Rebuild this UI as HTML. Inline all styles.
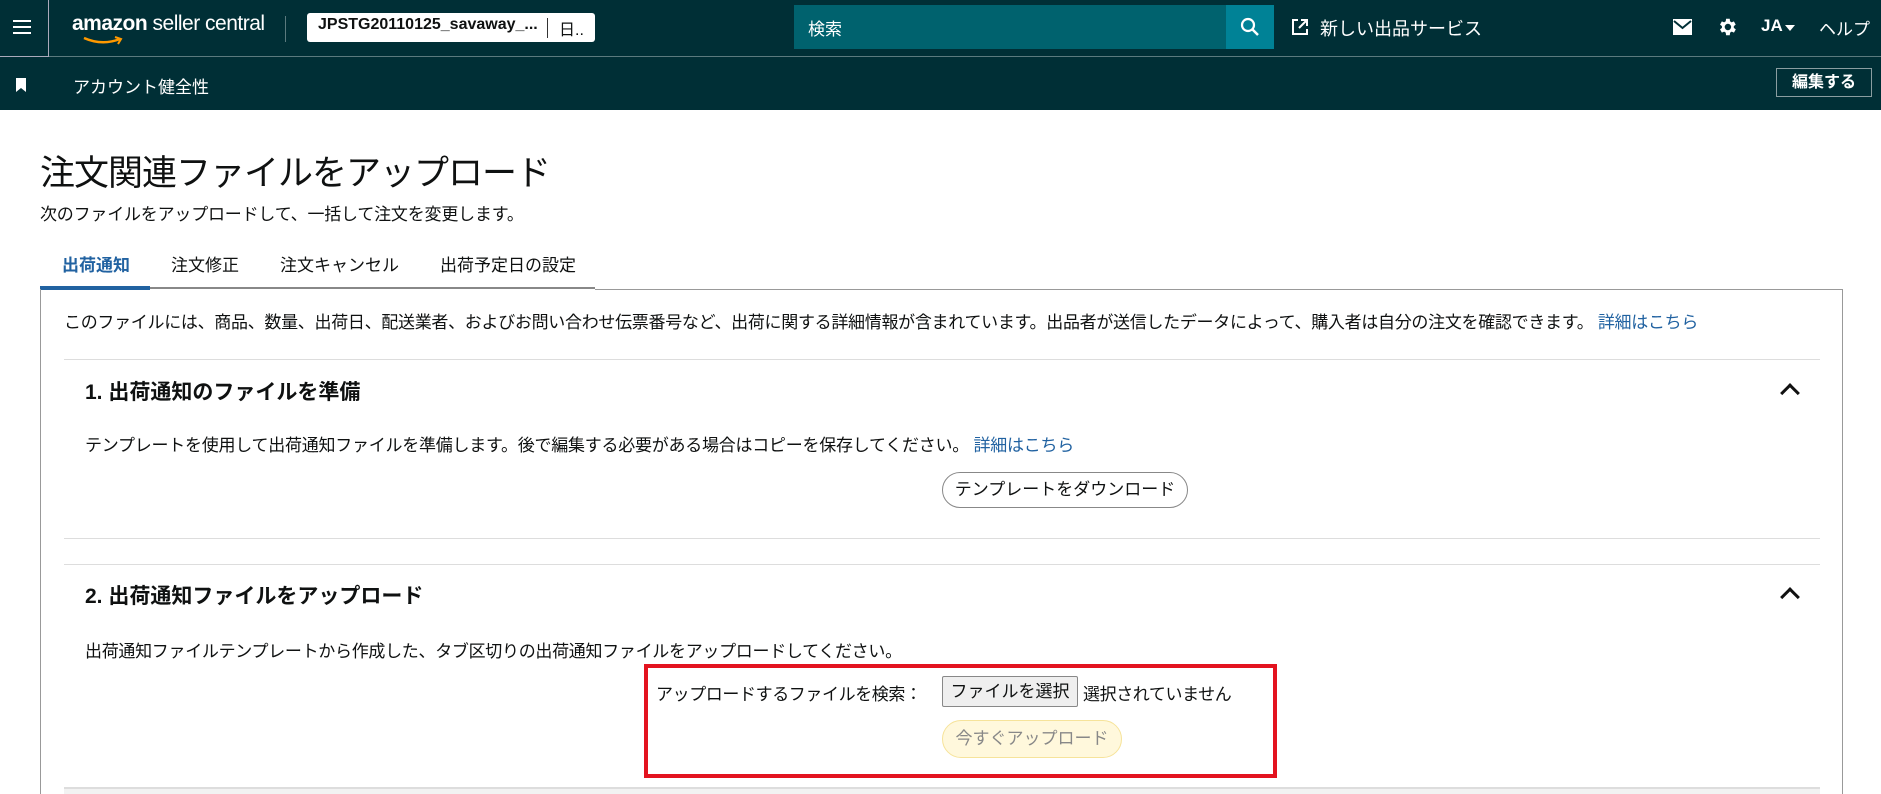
<!DOCTYPE html>
<html><head><meta charset="utf-8"><style>
*{box-sizing:border-box;margin:0;padding:0}
html,body{width:1881px;height:794px;overflow:hidden}
body{background:#fff;font-family:"Liberation Sans","Noto Sans CJK JP",sans-serif;color:#0f1111;position:relative}
.a{position:absolute;white-space:nowrap}
.top{position:absolute;left:0;top:0;width:1881px;height:57px;background:#002f36;border-bottom:1px solid #5b7a7e}
.sub{position:absolute;left:0;top:57px;width:1881px;height:53px;background:#002f36}
.w{color:#fff}
.link{color:#2162a1}
.sec{font-weight:bold;font-size:21px}
.chev{position:absolute;width:14px;height:14px;border-left:3px solid #111;border-top:3px solid #111;transform:rotate(45deg)}
.hr{position:absolute;left:64px;width:1756px;height:1px;background:#ddd}
</style></head><body>
<div class="top"></div>
<div class="sub"></div>
<div class="a" style="left:0;top:0;width:49px;height:57px;border-right:1px solid #aab;border-bottom:1px solid #aab"></div>
<div class="a" style="left:13px;top:20px;width:18px;height:2px;background:#fff;box-shadow:0 6px 0 #fff,0 12px 0 #fff"></div>
<div class="a w" style="left:72px;top:12px;font-size:21px;letter-spacing:-0.5px"><b>amazon</b> seller central</div>
<svg class="a" style="left:82px;top:36px" width="42" height="10"><path d="M2 2 Q20 10 38 3" stroke="#f90" stroke-width="2.5" fill="none"/><path d="M33 1 L39 3 L36 8" stroke="#f90" stroke-width="2" fill="none"/></svg>
<div class="a" style="left:285px;top:16px;width:1px;height:26px;background:#5b7a7e"></div>
<div class="a" style="left:307px;top:13px;width:288px;height:29px;background:#fff;border-radius:3px"></div>
<div class="a" style="left:318px;top:16px;font-size:16px;font-weight:bold">JPSTG20110125_savaway_...</div>
<div class="a" style="left:547px;top:18px;width:1px;height:20px;background:#333"></div>
<div class="a" style="left:559px;top:16px;font-size:16px">日..</div>
<div class="a" style="left:794px;top:5px;width:432px;height:44px;background:#00626e"></div>
<div class="a w" style="left:808px;top:15px;font-size:17px">検索</div>
<div class="a" style="left:1226px;top:5px;width:48px;height:44px;background:#008296"></div>
<svg class="a" style="left:1239px;top:16px" width="22" height="22"><circle cx="9" cy="9" r="6" stroke="#fff" stroke-width="2.2" fill="none"/><path d="M13.5 13.5 L19 19" stroke="#fff" stroke-width="2.5"/></svg>
<svg class="a" style="left:1290px;top:17px" width="20" height="20"><path d="M8 3 H3 V17 H17 V12" stroke="#fff" stroke-width="2" fill="none"/><path d="M11 3 H17 V9 M17 3 L9 11" stroke="#fff" stroke-width="2" fill="none"/></svg>
<div class="a w" style="left:1320px;top:15px;font-size:18px">新しい出品サービス</div>
<svg class="a" style="left:1672px;top:18px" width="21" height="18"><rect x="1" y="1" width="19" height="16" fill="#fff"/><path d="M2 3 L10.5 10 L19 3" stroke="#002f36" stroke-width="2" fill="none"/></svg>
<svg class="a" style="left:1716px;top:16px" width="22" height="22" viewBox="0 0 24 24"><path fill="#fff" d="M19.4 13a7.5 7.5 0 000-2l2.1-1.6-2-3.5-2.5 1a7 7 0 00-1.7-1L15 3h-4l-.4 2.9a7 7 0 00-1.7 1l-2.5-1-2 3.5L6.5 11a7.5 7.5 0 000 2l-2.1 1.6 2 3.5 2.5-1a7 7 0 001.7 1L11 21h4l.4-2.9a7 7 0 001.7-1l2.5 1 2-3.5zM13 15.5a3.5 3.5 0 110-7 3.5 3.5 0 010 7z"/></svg>
<div class="a w" style="left:1761px;top:16px;font-size:17px;font-weight:bold">JA</div>
<div class="a" style="left:1785px;top:25px;border:5px solid transparent;border-top:6px solid #fff"></div>
<div class="a w" style="left:1819px;top:15px;font-size:17px">ヘルプ</div>
<svg class="a" style="left:15px;top:78px" width="12" height="14"><path d="M1 0 H11 V14 L6 10 L1 14Z" fill="#fff"/></svg>
<div class="a w" style="left:73px;top:73px;font-size:17px">アカウント健全性</div>
<div class="a w" style="left:1776px;top:68px;width:96px;height:29px;border:1px solid #8a9da0;font-size:16px;font-weight:bold;text-align:center;line-height:27px">編集する</div>

<div class="a" style="left:40px;top:145px;font-size:35px;letter-spacing:-1px">注文関連ファイルをアップロード</div>
<div class="a" style="left:40px;top:200px;font-size:17px;letter-spacing:-0.2px">次のファイルをアップロードして、一括して注文を変更します。</div>
<div class="a" style="left:62px;top:251px;font-size:17px;font-weight:bold;color:#2162a1">出荷通知</div>
<div class="a" style="left:171px;top:251px;font-size:17px">注文修正</div>
<div class="a" style="left:280px;top:251px;font-size:17px">注文キャンセル</div>
<div class="a" style="left:440px;top:251px;font-size:17px">出荷予定日の設定</div>
<div class="a" style="left:40px;top:287px;width:555px;height:2px;background:#888"></div>
<div class="a" style="left:40px;top:286px;width:110px;height:4px;background:#2162a1"></div>
<div class="a" style="left:40px;top:289px;width:1803px;height:520px;border-left:1px solid #999;border-right:1px solid #999"></div>
<div class="a" style="left:595px;top:289px;width:1248px;height:1px;background:#999"></div>
<div class="a" style="left:64px;top:308px;font-size:17px;letter-spacing:-0.3px">このファイルには、商品、数量、出荷日、配送業者、およびお問い合わせ伝票番号など、出荷に関する詳細情報が含まれています。出品者が送信したデータによって、購入者は自分の注文を確認できます。 <span class="link">詳細はこちら</span></div>
<div class="hr" style="top:359px"></div>
<div class="a sec" style="left:85px;top:376px">1. 出荷通知のファイルを準備</div>
<div class="chev" style="left:1783px;top:386px"></div>
<div class="a" style="left:85px;top:431px;font-size:17px;letter-spacing:-0.25px">テンプレートを使用して出荷通知ファイルを準備します。後で編集する必要がある場合はコピーを保存してください。 <span class="link">詳細はこちら</span></div>
<div class="a" style="left:942px;top:472px;width:246px;height:36px;border:1px solid #888;border-radius:18px;font-size:17px;text-align:center;line-height:34px">テンプレートをダウンロード</div>
<div class="hr" style="top:538px"></div>
<div class="hr" style="top:564px"></div>
<div class="a sec" style="left:85px;top:580px">2. 出荷通知ファイルをアップロード</div>
<div class="chev" style="left:1783px;top:590px"></div>
<div class="a" style="left:85px;top:637px;font-size:17px;letter-spacing:-0.3px">出荷通知ファイルテンプレートから作成した、タブ区切りの出荷通知ファイルをアップロードしてください。</div>
<div class="a" style="left:644px;top:664px;width:633px;height:114px;border:4px solid #e3131f"></div>
<div class="a" style="left:656px;top:680px;font-size:17px;letter-spacing:-0.4px">アップロードするファイルを検索：</div>
<div class="a" style="left:942px;top:676px;width:136px;height:31px;border:1px solid #888;border-radius:2px;background:#efefef;font-size:17px;text-align:center;line-height:29px">ファイルを選択</div>
<div class="a" style="left:1083px;top:680px;font-size:17px;letter-spacing:-0.4px">選択されていません</div>
<div class="a" style="left:942px;top:720px;width:180px;height:38px;border:1px solid #f6e39a;border-radius:19px;background:#fff8dc;color:#888;font-size:17px;text-align:center;line-height:36px">今すぐアップロード</div>
<div class="a" style="left:64px;top:787px;width:1756px;height:7px;background:#f2f2f2;border-top:2px solid #ddd"></div>
</body></html>
